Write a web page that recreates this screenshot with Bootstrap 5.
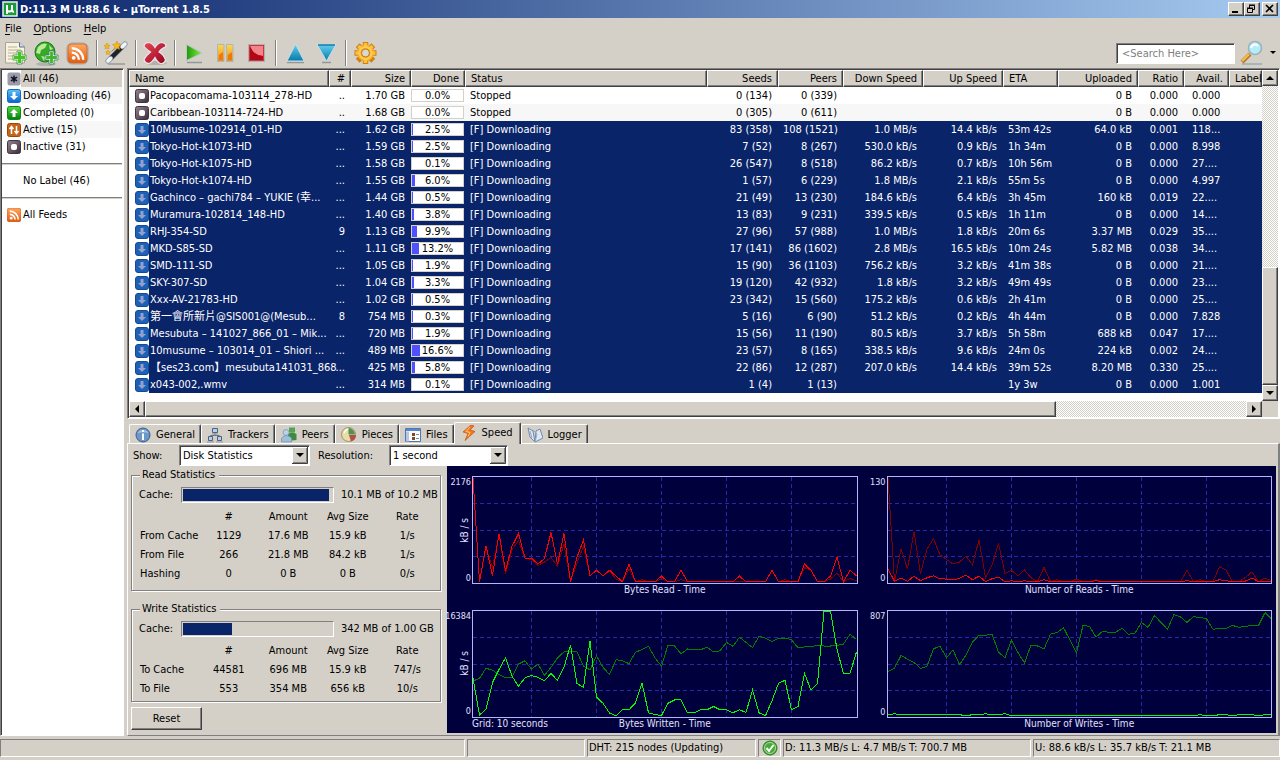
<!DOCTYPE html>
<html lang="en">
<head>
<meta charset="utf-8">
<meta name="viewport" content="width=device-width, initial-scale=1">
<title>µTorrent 1.8.5</title>
<link href="https://cdn.jsdelivr.net/npm/bootstrap@5.3.0/dist/css/bootstrap.min.css" rel="stylesheet">
<style>
:root{--face:#d4d0c8;--shade:#808080;--dark:#404040;--navy:#0a246a;}
body{background:var(--face);color:#000;font-family:"DejaVu Sans Condensed","DejaVu Sans","Noto Sans CJK TC",sans-serif;font-size:11px;line-height:17px;}
a{color:inherit;text-decoration:none}
button{color:#000;font-size:11px}
svg{display:block;flex:none}
.raised{background:var(--face);border:1px solid;border-color:#fff var(--dark) var(--dark) #fff;box-shadow:inset -1px -1px var(--shade);padding:0;border-radius:0}
.sunken{border:1px solid;border-color:var(--shade) #fff #fff var(--shade);box-shadow:inset 1px 1px var(--dark);padding:1px}
.thin-in{border:1px solid;border-color:var(--shade) #fff #fff var(--shade)}
.titlebar{height:18px;background:linear-gradient(to right,#0a246a,#a6caf0);color:#fff;font-weight:700}
.winbtns{padding-right:2px}
.winbtn{width:16px;height:14px}
.winbtn.apart{margin-left:2px}
.menubar{height:20px;padding-left:5px}
.menubar a{margin-right:12px}
.menubar u{text-underline-offset:2px}
.toolbar{height:30px}
.toolbtn{width:31px;height:28px;border:0;background:none;padding:0}
.vline{width:2px;height:26px;margin:0 3px;background:linear-gradient(to right,#808080 50%,#fff 50%)}
.search{width:119px;height:21px;background:#fff;font-size:11px;border-radius:0;padding:0 5px}
.search::placeholder{color:#808080;opacity:1}
.engines{width:14px}
.sidebar{width:124px;background:#fff;margin-right:3px}
.sidebar a{height:17px;padding-left:5px}
.sidebar a span{padding:1px 0 0 2px;height:17px;line-height:16px;white-space:nowrap}
.sidebar .tint{background:#f7f7f7}
.sidebar .current{background:var(--face)}
.sidebar .rule{height:17px;padding:8px 0 7px}
.sidebar .rule div{height:2px;background:linear-gradient(#808080 50%,#d4d0c8 50%)}
.jobs{table-layout:fixed;width:100%;border-collapse:separate;border-spacing:0;white-space:nowrap}
.jobs th{font-weight:400;height:17px;line-height:15px;padding:0 5px}
.jobs th:last-child{padding-right:0}
.jobs td{height:17px;line-height:16px;padding:1px 6px 0 5px}
.jobs th.num,.jobs td.num{text-align:right}
.jobs .name{padding:0 0 0 6px}
.jobs .name span{display:block;height:17px;padding:1px 0 0 1px;flex:1 1 auto;min-width:0}
.jobs .idx{padding:1px 6px 0 0}
.jobs .alt td,.jobs .alt .name span{background:#f7f7f7}
.jobs .picked td,.jobs .picked .name span{background:var(--navy);color:#fff}
.jobs tr td.name{background:#fff}
.jobs td.gauge{padding:0 1px 0 0}
.done{height:13px;border:1px solid var(--face);border-radius:0;background:#fff;color:#000;font-size:11px;position:relative;margin-bottom:1px}
.done .progress-bar{background:#5050ff;transition:none}
.done b{position:absolute;inset:0;font-weight:400;text-align:center;line-height:11px}
.sb{width:16px;height:16px;display:flex;align-items:center;justify-content:center;flex:none}
.corner{background:var(--face)}
.track{background:repeating-conic-gradient(#fff 0 25%,#d4d0c8 0 50%) 0 0/2px 2px}
.tabs{height:24px;padding-left:2px}
.tab{height:19px;border:0;border-top:1px solid #fff;border-left:1px solid #fff;border-right:1px solid var(--dark);box-shadow:inset -1px 0 var(--shade);border-radius:2px 2px 0 0;background:none;padding:2px 5px 0;gap:5px;line-height:16px}
.tab.active{height:22px;padding:0 7px 2px 6px;margin-bottom:-1px;background:var(--face);position:relative}
.sheet{border:1px solid;border-color:#fff var(--shade) var(--shade) #fff;border-right-width:2px;padding:0 2px 2px 3px}
.controls{height:22px}
.controls .lead-show{width:48px;padding-left:2px}
.controls .lead-res{width:79px;padding-left:8px}
.controls select{height:21px;border:1px solid;border-color:#808080 #fff #fff #808080;box-shadow:inset 1px 1px #404040;border-radius:0;font-size:11px;line-height:17px;padding:1px 18px 0 3px;color:#000;background:#fff url("data:image/svg+xml,%3Csvg xmlns='http://www.w3.org/2000/svg' width='16' height='17'%3E%3Cpath fill='%23d4d0c8' d='M0 0h16v17H0z'/%3E%3Cpath fill='none' stroke='%23fff' d='M.5 16V.5H15'/%3E%3Cpath fill='none' stroke='%23404040' d='M0 16.5h15.5V0'/%3E%3Cpath fill='none' stroke='%23808080' d='M1 15.5h13.5V1'/%3E%3Cpath d='M4 6h8l-4 4z'/%3E%3C/svg%3E") no-repeat right 1px top 1px/16px 17px}
.controls .pick-show{width:131px}
.controls .pick-res{width:119px}
.stats{width:316px;padding:2px 6px 3px 0}
.group{border:1px solid var(--shade);box-shadow:1px 1px #fff,inset 1px 1px #fff;padding:4px 3px 7px 7px}
.group + .group{margin-top:11px;padding-bottom:3px}
.group legend{font-size:11px;line-height:14px;float:none;width:auto;margin:0 0 0 1px;padding:0 4px 0 2px;background:var(--face)}
.meter{height:16px;border-radius:0;background:none;padding:1px}
.meter .progress-bar{background:var(--navy);transition:none}
.cachelabel{width:42px}
.cachetext{width:96px;margin-left:7px;white-space:nowrap}
.counts{table-layout:fixed;width:100%;margin-top:3px;text-align:center;white-space:nowrap}
.counts th{font-weight:400}
.counts thead th{height:20px}
.counts tbody tr{height:18px}
.counts tbody th{text-align:left}
.counts .first{width:60px}
.reset{width:71px;height:23px;margin-top:5px}
.charts{background:#00003c;color:#e0e0ff;padding:10px 4px 2px 0;display:grid;grid-template-columns:1fr 1fr;column-gap:4px;row-gap:12px;line-height:12px}
.chart{display:grid;grid-template-columns:25px 1fr;grid-template-rows:108px 12px;font-size:10px}
.axis{display:flex;flex-direction:column;justify-content:space-between;align-items:flex-end;padding-right:1px;font-size:9px}
.axis i{font-style:normal;font-size:10px;writing-mode:vertical-rl;transform:rotate(180deg)}
.plot{border:1px solid #b4b4ff;width:100%;height:108px}
.cap{grid-column:2;text-align:center;position:relative}
.cap em{position:absolute;left:0;font-style:normal}
.statusbar{height:25px;padding:3px 0;gap:2px;border-bottom:1px solid #fff;margin-bottom:3px}
.statusbar>div{height:18px;line-height:16px;padding-left:1px;white-space:nowrap;overflow:hidden}
.cell-a{width:118px}.cell-b{width:169px}.cell-c{width:23px}.cell-d{width:248px}.cell-e{width:247px}
</style>
</head>
<body class="d-flex flex-column min-vh-100">

<svg width="0" height="0" class="position-absolute" aria-hidden="true">
<defs>
<linearGradient id="gBlue" x2="0" y2="1"><stop stop-color="#5cc0ff"/><stop offset="1" stop-color="#0a64c8"/></linearGradient>
<linearGradient id="gGreen" x2="0" y2="1"><stop stop-color="#58dc48"/><stop offset="1" stop-color="#047a0c"/></linearGradient>
<linearGradient id="gPlay" x2="1" y2="0"><stop stop-color="#20980c"/><stop offset="1" stop-color="#80f040"/></linearGradient>
<linearGradient id="gOrange" x2="0" y2="1"><stop stop-color="#ffa860"/><stop offset="1" stop-color="#e05c10"/></linearGradient>
<linearGradient id="gGray" x2="1" y2="1"><stop stop-color="#98848f"/><stop offset="1" stop-color="#382c38"/></linearGradient>
<linearGradient id="gTeal" x2="0" y2="1"><stop stop-color="#60d0f0"/><stop offset="1" stop-color="#0878a8"/></linearGradient>
<linearGradient id="gGold" x2="0" y2="1"><stop stop-color="#ffd850"/><stop offset="1" stop-color="#f08c10"/></linearGradient>
<linearGradient id="gRed" x2="1" y2="1"><stop stop-color="#e84858"/><stop offset="1" stop-color="#98001c"/></linearGradient>
<symbol id="sAll" viewBox="0 0 14 14"><rect x=".5" y=".5" width="13" height="13" rx="2" fill="#9a9cac"/><path d="M7 3.500v7M4 5.200l6 3.600M10 5.200l-6 3.600" stroke="#101020" stroke-width="1.500"/></symbol>
<symbol id="sDown" viewBox="0 0 14 14"><rect x=".5" y=".5" width="13" height="13" rx="2" fill="url(#gBlue)" stroke="#1468c8"/><path d="M5.500 3h3v4H11l-4 4-4-4h2.500z" fill="#fff"/></symbol>
<symbol id="sDownSel" viewBox="0 0 14 14"><rect x=".5" y=".5" width="13" height="13" rx="2.500" fill="#1e60b4" stroke="#124a98"/><path d="M5.500 3h3v4H11l-4 4-4-4h2.500z" fill="#92a0d0"/></symbol>
<symbol id="sUp" viewBox="0 0 14 14"><rect x=".5" y=".5" width="13" height="13" rx="2" fill="url(#gGreen)" stroke="#0a8c14"/><path d="M5.500 11h3V7H11L7 3 3 7h2.500z" fill="#fff"/></symbol>
<symbol id="sAct" viewBox="0 0 14 14"><rect x=".5" y=".5" width="13" height="13" rx="2" fill="#c86418" stroke="#98480c"/><path d="M4.500 11V4M2.500 6l2-2.500 2 2.500M9.500 3v7M7.500 8l2 2.500 2-2.500" stroke="#fff" stroke-width="1.500" fill="none"/></symbol>
<symbol id="sStop" viewBox="0 0 14 14"><rect x=".5" y=".5" width="13" height="13" rx="2" fill="url(#gGray)" stroke="#42343f"/><rect x="4" y="4" width="6" height="6" rx="2" fill="#fff"/></symbol>
<symbol id="sRss" viewBox="0 0 24 24"><rect x="2" y="2" width="20" height="20" rx="4" fill="url(#gOrange)" stroke="#c86830"/><circle cx="8" cy="16.500" r="2" fill="#fff"/><path d="M6 11a7.500 7.500 0 0 1 7.500 7.500M6 6.500a12 12 0 0 1 12 12" stroke="#fff" stroke-width="2.400" fill="none"/></symbol>
</defs>
</svg>

<header>
  <div class="titlebar d-flex align-items-center">
    <svg width="20" height="18" viewBox="0 0 20 18"><rect x="3" y="2" width="14" height="14" fill="#1a9a38" stroke="#e8f4e8" stroke-width="1.500"/><path d="M7 5v9M7 9.500c0 2.500 5 2.500 5 0V5M12 9c0 2 .5 3 2 2.500" stroke="#fff" stroke-width="2" fill="none"/></svg>
    <span class="text-nowrap">D:11.3 M U:88.6 k - µTorrent 1.8.5</span>
    <div class="winbtns ms-auto d-flex">
      <button class="raised winbtn" aria-label="Minimize"><svg width="14" height="12"><path d="M3 8h6v2H3z"/></svg></button>
      <button class="raised winbtn" aria-label="Restore"><svg width="14" height="12"><path d="M4.500 5V2.500h5v4H8M4 2h6M2.500 5.500h5v4h-5zM2 5h6" fill="none" stroke="#000"/></svg></button>
      <button class="raised winbtn apart" aria-label="Close"><svg width="14" height="12"><path d="M3 2l7 7M10 2L3 9" stroke="#000" stroke-width="1.600"/></svg></button>
    </div>
  </div>
  <nav class="menubar d-flex align-items-center">
    <a href="#"><u>F</u>ile</a><a href="#"><u>O</u>ptions</a><a href="#"><u>H</u>elp</a>
  </nav>
  <div class="toolbar d-flex align-items-center">
    <button class="toolbtn" aria-label="Add Torrent"><svg width="31" height="28" viewBox="0 0 31 28"><path d="M5.500 3.500h14l5 4V24h-19z" fill="#f6f2e4" stroke="#a8a490"/><path d="M19.500 3.500v4.500h5" fill="#c8d8e8" stroke="#607088"/><path d="M8 8h9M8 11h13M8 14h8M8 17h6M8 20h5" stroke="#c0b088"/><path d="M17.500 12.500h4v4h4v4h-4v4h-4v-4h-4v-4h4z" fill="#44c420" stroke="#fff"/><path d="M17 12h5v4h4v5h-4v4h-5v-4h-4v-5h4z" fill="none" stroke="#3a8a3a" stroke-width=".8"/></svg></button>
    <button class="toolbtn" aria-label="Add Torrent from URL"><svg width="31" height="28" viewBox="0 0 31 28"><ellipse cx="15" cy="25" rx="10" ry="2" fill="#b0b4a8"/><circle cx="14" cy="13" r="10" fill="#38a828" stroke="#1c7818"/><path d="M7 8c4-4 7-4 9-3l-2 4-4 2-1 4-4-1zM18 6l4 4-3 1zM10 17l5 1-2 4z" fill="#b8ec98"/><path d="M18.500 12.500h4v4h4v4h-4v4h-4v-4h-4v-4h4z" fill="#44b428" stroke="#e8ffe8" stroke-width="1.200"/><path d="M18 12h5v4h4v5h-4v4h-5v-4h-4v-5h4z" fill="none" stroke="#307868" stroke-width=".8"/></svg></button>
    <button class="toolbtn" aria-label="Add RSS Feed"><svg class="mx-auto" width="25" height="25"><rect x="2" y="2" width="21" height="21" rx="5" fill="#e8f0f4" stroke="#98a8b0"/><use href="#sRss" x="1" y="1" width="23" height="23"/></svg></button>
    <div class="vline"></div>
    <button class="toolbtn" aria-label="Create New Torrent"><svg width="31" height="28" viewBox="0 0 31 28"><path d="M7 25h17" stroke="#a8a8a0" stroke-width="2"/><path d="M7 22L24 5" stroke="#98a4ac" stroke-width="5.500" stroke-linecap="round"/><path d="M10 19L21 8" stroke="#202428" stroke-width="4.500"/><path d="M7 22l3-3M21 8l3-3" stroke="#f0f4f8" stroke-width="3.500" stroke-linecap="round"/><path d="M10.500 12.500l8-8" stroke="#788088" stroke-width="1"/><path d="M16 2l1 3 3 .5-2 2 .5 3-2.500-1.500-3 1.500.5-3-2-2 3-.5zM6 4l1 2 2 .5-1.500 1.500.5 2-2-1-2 1 .5-2L3 6.500 5 6zM7 11l.8 1.400 1.700.3-1 1.300.2 1.500-1.700-.7-1.500.7.200-1.500-1-1.300 1.500-.3z" fill="#f8b818" stroke="#c88810" stroke-width=".5"/></svg></button>
    <div class="vline"></div>
    <button class="toolbtn" aria-label="Remove"><svg width="31" height="28" viewBox="0 0 31 28"><ellipse cx="16" cy="24" rx="11" ry="2" fill="#b4b0a8"/><path d="M8 3.500q4 0 7 5 3-5 7-5 4 1 4 4-5 2-7 5.500 5 3 6.500 8-1 4-5 3.500-3-1-5.500-6-3 5-6 6-4 0-5-4 2-4 6.500-7.500Q6 10 4 7.500q0-3 4-4z" fill="url(#gRed)" stroke="#e8e8ec" stroke-width="1.200"/></svg></button>
    <div class="vline"></div>
    <button class="toolbtn" aria-label="Start"><svg width="31" height="28" viewBox="0 0 31 28"><path d="M8 23.500h15" stroke="#90989c" stroke-width="1.500"/><path d="M7.500 5.500L23 14 7.500 21.500z" fill="url(#gPlay)" stroke="#b8c8c8"/></svg></button>
    <button class="toolbtn" aria-label="Pause"><svg width="31" height="28" viewBox="0 0 31 28"><path d="M7.500 5.500h6.500v17H7.500zM16.500 5.500H23v17h-6.500z" fill="url(#gGold)" stroke="#a8b8b8"/><path d="M9 16l4-3v8H9zM18 16l4-3v8h-4z" fill="#f07808"/></svg></button>
    <button class="toolbtn" aria-label="Stop"><svg width="31" height="28" viewBox="0 0 31 28"><rect x="7.500" y="5.500" width="16" height="17" fill="#d83038" stroke="#a8b4b4"/><path d="M9 7h13v10Q12 16 9 7z" fill="#f08488"/><path d="M9 7v14h13v-4Q12 16 9 7z" fill="#b00818"/></svg></button>
    <div class="vline"></div>
    <button class="toolbtn" aria-label="Move Up Queue"><svg width="31" height="28" viewBox="0 0 31 28"><path d="M7 23.500h17" stroke="#90989c" stroke-width="1.500"/><path d="M15.500 5L24 22H7z" fill="url(#gTeal)" stroke="#c8e0e8"/></svg></button>
    <button class="toolbtn" aria-label="Move Down Queue"><svg width="31" height="28" viewBox="0 0 31 28"><path d="M11 23.500h9" stroke="#90989c" stroke-width="1.500"/><path d="M6 5.500h19L15.500 22z" fill="url(#gTeal)" stroke="#c8e0e8"/><path d="M7 6h17" stroke="#1878a8" stroke-width="1.500"/></svg></button>
    <div class="vline"></div>
    <button class="toolbtn" aria-label="Preferences"><svg width="31" height="28" viewBox="0 0 31 28"><g stroke="#d08010" stroke-width="5.500"><path d="M15.500 3v22M4.500 14h22M7.700 6.200l15.600 15.600M23.300 6.200L7.700 21.800"/></g><circle cx="15.500" cy="14" r="8.500" fill="#f4a828"/><g stroke="#fcc040" stroke-width="3.500"><path d="M15.500 4v4M5.500 14h4M8.500 7l3 3M22.500 7l-3 3M15.500 20v4M21.500 14h4"/></g><circle cx="15.500" cy="14" r="6" fill="none" stroke="#ffcc50" stroke-width="2"/><circle cx="15.500" cy="14" r="4" fill="#dcd8cc" stroke="#c07810"/></svg></button>
    <div class="ms-auto d-flex align-items-center">
      <input type="text" class="search sunken" placeholder="&lt;Search Here&gt;" aria-label="Search">
      <button class="toolbtn" aria-label="Run search"><svg width="31" height="28" viewBox="0 0 31 28"><path d="M7 25h20" stroke="#a8b4b8" stroke-width="2"/><path d="M7 23l8-8" stroke="#b07820" stroke-width="4"/><path d="M7 22l7-7" stroke="#f4b848" stroke-width="2.500"/><circle cx="20" cy="9" r="6.500" fill="#b4ecf8" stroke="#98b4c0" stroke-width="1.600"/><path d="M16 9a4 4 0 0 1 7-2" stroke="#fff" stroke-width="2" fill="none"/></svg></button>
      <button class="toolbtn engines" aria-label="Search engines"><svg class="mx-auto" width="8" height="6"><path d="M1 1h6L4 4z"/></svg></button>
    </div>
  </div>
</header>

<main class="d-flex flex-fill">
  <nav class="sidebar sunken flex-shrink-0">
    <a href="#" class="d-flex align-items-center"><svg width="14" height="14"><use href="#sAll"/></svg><span class="flex-fill current">All (46)</span></a>
    <a href="#" class="d-flex align-items-center"><svg width="14" height="14"><use href="#sDown"/></svg><span class="flex-fill tint">Downloading (46)</span></a>
    <a href="#" class="d-flex align-items-center"><svg width="14" height="14"><use href="#sUp"/></svg><span class="flex-fill">Completed (0)</span></a>
    <a href="#" class="d-flex align-items-center"><svg width="14" height="14"><use href="#sAct"/></svg><span class="flex-fill tint">Active (15)</span></a>
    <a href="#" class="d-flex align-items-center"><svg width="14" height="14"><use href="#sStop"/></svg><span class="flex-fill">Inactive (31)</span></a>
    <div class="rule"><div></div></div>
    <a href="#" class="d-flex align-items-center"><svg width="14" height="14"></svg><span>No Label (46)</span></a>
    <div class="rule"><div></div></div>
    <a href="#" class="d-flex align-items-center"><svg width="14" height="14" viewBox="2 2 20 20"><use href="#sRss" width="24" height="24"/></svg><span>All Feeds</span></a>
  </nav>

  <div class="flex-fill d-flex flex-column">
    <section class="sunken flex-fill d-flex flex-column bg-white">
      <div class="d-flex flex-fill">
        <div class="flex-fill pb-2">
          <table class="jobs">
            <colgroup><col style="width:200px"><col style="width:22px"><col style="width:60px"><col style="width:54px"><col><col style="width:71px"><col style="width:65px"><col style="width:80px"><col style="width:80px"><col style="width:55px"><col style="width:80px"><col style="width:46px"><col style="width:45px"><col style="width:33px"></colgroup>
            <thead><tr><th class="raised">Name</th><th class="raised num">#</th><th class="raised num">Size</th><th class="raised num">Done</th><th class="raised">Status</th><th class="raised num">Seeds</th><th class="raised num">Peers</th><th class="raised num">Down Speed</th><th class="raised num">Up Speed</th><th class="raised">ETA</th><th class="raised num">Uploaded</th><th class="raised num">Ratio</th><th class="raised num">Avail.</th><th class="raised">Label</th></tr></thead>
            <tbody id="jobs"></tbody>
          </table>
        </div>
        <div class="d-flex flex-column">
          <button class="raised sb" aria-label="Scroll up"><svg width="8" height="5"><path d="M4 0l4 4H0z"/></svg></button>
          <div class="track flex-fill d-flex flex-column"><div style="flex:61"></div><div class="raised" style="flex:39"></div></div>
          <button class="raised sb" aria-label="Scroll down"><svg width="8" height="5"><path d="M4 4l4-4H0z"/></svg></button>
        </div>
      </div>
      <div class="d-flex">
        <button class="raised sb" aria-label="Scroll left"><svg width="5" height="8"><path d="M0 4l4-4v8z"/></svg></button>
        <div class="track flex-fill d-flex"><div class="raised" style="flex:911"></div><div style="flex:190"></div></div>
        <button class="raised sb" aria-label="Scroll right"><svg width="5" height="8"><path d="M4 4L0 0v8z"/></svg></button>
        <div class="sb corner"></div>
      </div>
    </section>

    <div class="tabs d-flex align-items-end" role="tablist">
      <button class="tab d-flex" role="tab"><svg width="16" height="16"><circle cx="8" cy="8" r="7" fill="#6c98c8" stroke="#3c5c88"/><path d="M2.500 6a6 5 0 0 1 11 0q-5-1.500-11 0z" fill="#a4c4e4"/><path d="M8 3v2M8 6.500V13" stroke="#fff" stroke-width="2"/></svg>General</button>
      <button class="tab d-flex" role="tab"><svg width="16" height="16"><path d="M8 6v3M3.500 10V8.500h9V10" stroke="#687888" fill="none"/><g fill="#b4d0f0" stroke="#50607c"><path d="M5.500 1.500h5v4h-5zM1.500 9.500h4v4h-4zM10.500 9.500h4v4h-4z"/></g><path d="M5 7h6M0 15h7M9 15h7" stroke="#8c94a0"/></svg>Trackers</button>
      <button class="tab d-flex" role="tab"><svg width="16" height="16"><path d="M8 .5h6v5H8z" fill="#58a058"/><path d="M7 14V7q4-3 8.500 0v6z" fill="#3c8c40"/><circle cx="5" cy="5.500" r="3" fill="#b4d4ec" stroke="#7890a8" stroke-width=".7"/><path d="M.5 15v-4q5-5 10 0v4z" fill="#9cc0dc" stroke="#7890a8" stroke-width=".7"/></svg>Peers</button>
      <button class="tab d-flex" role="tab"><svg width="16" height="16"><circle cx="7.500" cy="7.500" r="7" fill="#e8dca8" stroke="#a09060"/><path d="M7.500 7.500V1a7 7 0 0 1 6.500 6.500z" fill="#4c9450"/><path d="M8 8h7q0 5-5 6.500z" fill="#b05048"/><path d="M3 6q1-3 4-4" stroke="#fff" stroke-width="1.500" fill="none"/></svg>Pieces</button>
      <button class="tab d-flex" role="tab"><svg width="16" height="16"><path d="M.5 1.500h15v13H.5z" fill="#f8fafc" stroke="#5078b0"/><path d="M1 3h14" stroke="#5888d0" stroke-width="2"/><path d="M1 4.500h3v10H1z" fill="#b4c8e4"/><path d="M7 6h3v3H7zM7 10h3v3H7z" fill="#804828"/><path d="M11 7.500h3M11 11.500h3" stroke="#888"/></svg>Files</button>
      <button class="tab active d-flex align-items-center" role="tab" aria-selected="true"><svg width="16" height="16"><path d="M10 0L2 7l5 1.500L4 15.500l10-9L9 5l4-4z" fill="#f47820" stroke="#c84c10" stroke-width=".7"/><path d="M9 2L5 6.500l4 1-2 4" stroke="#ffcc70" fill="none"/></svg>Speed</button>
      <button class="tab d-flex" role="tab"><svg width="16" height="16"><path d="M1 1l5 3 2 11-5-5zM9 4l4-2 3 9-8 4z" fill="#dce8f4" stroke="#7488a8"/><path d="M3 4l2 7M6 3l4 4-2 8" stroke="#98a8c4" fill="none"/></svg>Logger</button>
    </div>

    <section class="sheet">
      <div class="controls d-flex align-items-center">
        <label for="show" class="lead-show">Show:</label>
        <select id="show" class="form-select pick-show"><option>Disk Statistics</option></select>
        <label for="res" class="lead-res">Resolution:</label>
        <select id="res" class="form-select pick-res"><option>1 second</option></select>
      </div>
      <div class="d-flex">
        <div class="stats flex-shrink-0">
          <fieldset class="group">
            <legend>Read Statistics</legend>
            <div class="d-flex align-items-center">
              <span class="cachelabel">Cache:</span>
              <div class="progress meter thin-in flex-fill"><div class="progress-bar" style="width:98%"></div></div>
              <span class="cachetext">10.1 MB of 10.2 MB</span>
            </div>
            <table class="counts">
              <thead><tr><th class="first"></th><th>#</th><th>Amount</th><th>Avg Size</th><th>Rate</th></tr></thead>
              <tbody>
                <tr><th>From Cache</th><td>1129</td><td>17.6 MB</td><td>15.9 kB</td><td>1/s</td></tr>
                <tr><th>From File</th><td>266</td><td>21.8 MB</td><td>84.2 kB</td><td>1/s</td></tr>
                <tr><th>Hashing</th><td>0</td><td>0 B</td><td>0 B</td><td>0/s</td></tr>
              </tbody>
            </table>
          </fieldset>
          <fieldset class="group">
            <legend>Write Statistics</legend>
            <div class="d-flex align-items-center">
              <span class="cachelabel">Cache:</span>
              <div class="progress meter thin-in flex-fill"><div class="progress-bar" style="width:33%"></div></div>
              <span class="cachetext">342 MB of 1.00 GB</span>
            </div>
            <table class="counts">
              <thead><tr><th class="first"></th><th>#</th><th>Amount</th><th>Avg Size</th><th>Rate</th></tr></thead>
              <tbody>
                <tr><th>To Cache</th><td>44581</td><td>696 MB</td><td>15.9 kB</td><td>747/s</td></tr>
                <tr><th>To File</th><td>553</td><td>354 MB</td><td>656 kB</td><td>10/s</td></tr>
              </tbody>
            </table>
          </fieldset>
          <button class="raised reset">Reset</button>
        </div>
        <div class="charts flex-fill">
          <div class="chart"><div class="axis"><span>2176</span><i>kB / s</i><span>0</span></div><svg class="plot" id="bytesRead"></svg><div class="cap">Bytes Read - Time</div></div>
          <div class="chart"><div class="axis"><span>130</span><span>0</span></div><svg class="plot" id="reads"></svg><div class="cap">Number of Reads - Time</div></div>
          <div class="chart"><div class="axis"><span>16384</span><i>kB / s</i><span>0</span></div><svg class="plot" id="bytesWritten"></svg><div class="cap"><em>Grid: 10 seconds</em>Bytes Written - Time</div></div>
          <div class="chart"><div class="axis"><span>807</span><span>0</span></div><svg class="plot" id="writes"></svg><div class="cap">Number of Writes - Time</div></div>
        </div>
      </div>
    </section>
  </div>
</main>

<footer class="statusbar d-flex">
  <div class="thin-in flex-fill"></div>
  <div class="thin-in cell-a"></div>
  <div class="thin-in cell-b">DHT: 215 nodes (Updating)</div>
  <div class="thin-in cell-c"><svg class="mx-auto" width="16" height="16"><circle cx="8" cy="8" r="7" fill="#48a838" stroke="#2c7c28"/><circle cx="8" cy="8" r="5.500" fill="none" stroke="#a8e098"/><path d="M4.500 8l2.500 3 4.500-6" stroke="#fff" stroke-width="2" fill="none"/></svg></div>
  <div class="thin-in cell-d">D: 11.3 MB/s L: 4.7 MB/s T: 700.7 MB</div>
  <div class="thin-in cell-e">U: 88.6 kB/s L: 35.7 kB/s T: 21.1 MB</div>
</footer>

<script src="https://cdn.jsdelivr.net/npm/bootstrap@5.3.0/dist/js/bootstrap.bundle.min.js"></script>
<script>
// name | # | size | done | seeds | peers | down | up | eta | uploaded | ratio | availability
const jobs = `Pacopacomama-103114_278-HD|..|1.70 GB|0.0|0 (134)|0 (339)||||0 B|0.000|0.000
Caribbean-103114-724-HD|..|1.68 GB|0.0|0 (305)|0 (611)||||0 B|0.000|0.000
10Musume-102914_01-HD|...|1.62 GB|2.5|83 (358)|108 (1521)|1.0 MB/s|14.4 kB/s|53m 42s|64.0 kB|0.001|118...
Tokyo-Hot-k1073-HD|...|1.59 GB|2.5|7 (52)|8 (267)|530.0 kB/s|0.9 kB/s|1h 34m|0 B|0.000|8.998
Tokyo-Hot-k1075-HD|...|1.58 GB|0.1|26 (547)|8 (518)|86.2 kB/s|0.7 kB/s|10h 56m|0 B|0.000|27....
Tokyo-Hot-k1074-HD|...|1.55 GB|6.0|1 (57)|6 (229)|1.8 MB/s|2.1 kB/s|55m 5s|0 B|0.000|4.997
Gachinco – gachi784 – YUKIE (幸...|...|1.44 GB|0.5|21 (49)|13 (230)|184.6 kB/s|6.4 kB/s|3h 45m|160 kB|0.019|22....
Muramura-102814_148-HD|...|1.40 GB|3.8|13 (83)|9 (231)|339.5 kB/s|0.5 kB/s|1h 11m|0 B|0.000|14....
RHJ-354-SD|9|1.13 GB|9.9|27 (96)|57 (988)|1.0 MB/s|1.8 kB/s|20m 6s|3.37 MB|0.029|35....
MKD-S85-SD|...|1.11 GB|13.2|17 (141)|86 (1602)|2.8 MB/s|16.5 kB/s|10m 24s|5.82 MB|0.038|34....
SMD-111-SD|...|1.05 GB|1.9|15 (90)|36 (1103)|756.2 kB/s|3.2 kB/s|41m 38s|0 B|0.000|21....
SKY-307-SD|...|1.04 GB|3.3|19 (120)|42 (932)|1.8 kB/s|3.2 kB/s|49m 49s|0 B|0.000|23....
Xxx-AV-21783-HD|...|1.02 GB|0.5|23 (342)|15 (560)|175.2 kB/s|0.6 kB/s|2h 41m|0 B|0.000|25....
第一會所新片@SIS001@(Mesub...|8|754 MB|0.3|5 (16)|6 (90)|51.2 kB/s|0.2 kB/s|4h 44m|0 B|0.000|7.828
Mesubuta – 141027_866_01 – Mik...|...|720 MB|1.9|15 (56)|11 (190)|80.5 kB/s|3.7 kB/s|5h 58m|688 kB|0.047|17....
10musume – 103014_01 – Shiori ...|...|489 MB|16.6|23 (57)|8 (165)|338.5 kB/s|9.6 kB/s|24m 0s|224 kB|0.002|24....
【ses23.com】mesubuta141031_868|...|425 MB|5.8|22 (86)|12 (287)|207.0 kB/s|14.4 kB/s|39m 52s|8.20 MB|0.330|25....
x043-002,.wmv|...|314 MB|0.1|1 (4)|1 (13)|||1y 3w|0 B|0.000|1.001`.split('\n').map(l => l.split('|'));

document.getElementById('jobs').innerHTML = jobs.map((j, i) => {
  const on = i > 1, [name, n, size, done, seeds, peers, down, up, eta, sent, ratio, avail] = j;
  return `<tr class="${on ? 'picked' : i ? 'alt' : ''}">
<td class="name"><div class="d-flex align-items-center"><svg width="14" height="14"><use href="#${on ? 'sDownSel' : 'sStop'}"/></svg><span>${name}</span></div></td>
<td class="num idx">${n}</td><td class="num">${size}</td>
<td class="gauge"><div class="progress done"><div class="progress-bar" style="width:${done}%"></div><b>${done}%</b></div></td>
<td>${on ? '[F] Downloading' : 'Stopped'}</td><td class="num">${seeds}</td><td class="num">${peers}</td><td class="num">${down}</td><td class="num">${up}</td>
<td>${eta}</td><td class="num">${sent}</td><td class="num">${ratio}</td><td class="ps-2">${avail}</td><td></td></tr>`;
}).join('');

// sixty samples per series, 0 to 321 over the height of a plot
const flat = (v, n) => Array(n).fill(v);
const series = {
  bytesRead: [['#800000', [319,2,105,45,145,26,100,127,74,70,52,62,76,50,118,2,60,110,20,37,20,34,10,2,40,2,8,2,2,10,2,2,8,...flat(2,13),37,2,8,2,2,45,37,2,2,10,28,2,12,4]],
    ['#ff0000', [319,2,112,20,149,36,110,149,74,74,56,73,152,56,149,2,77,130,20,37,20,37,19,2,56,2,2,2,2,19,2,2,37,...flat(2,8),19,...flat(2,4),37,...flat(2,4),56,37,2,2,19,76,2,37,20]]],
  reads: [['#800000', [319,2,103,40,155,26,102,133,84,70,56,62,80,53,130,14,52,119,27,37,20,38,14,2,46,2,8,2,2,10,2,2,8,...flat(2,13),37,2,8,2,2,47,38,2,2,15,32,2,13,5]],
    ['#ff0000', [41,3,13,3,19,5,14,20,11,10,8,12,22,8,19,2,11,16,2,5,2,5,2,2,8,...flat(2,7),5,...flat(2,13),5,...flat(2,4),8,5,2,2,4,13,2,4,2]]],
  bytesWritten: [['#008000', [108,116,147,141,128,118,120,160,170,144,160,125,150,179,197,197,197,153,142,185,150,128,173,170,161,196,204,214,179,153,218,215,191,206,203,203,212,197,200,226,214,242,226,210,245,239,228,239,239,235,209,212,212,218,215,215,217,221,251,235]],
    ['#00ff00', [117,4,22,103,143,179,123,92,118,125,119,109,131,110,150,218,100,89,231,59,40,10,2,20,20,41,101,11,5,3,40,50,50,11,11,20,20,30,20,20,11,20,12,80,11,2,48,101,110,20,30,131,80,100,321,321,205,131,131,197]]],
  writes: [['#008000', [137,147,186,175,165,146,153,206,215,179,203,158,187,227,248,248,251,196,179,233,195,163,218,215,206,251,256,271,233,194,278,275,242,260,257,257,269,251,254,287,272,308,287,266,311,304,287,305,302,299,266,269,269,278,272,275,278,278,317,298]],
    ['#00ff00', [5,8,...flat(5,10),2,5,5,8,5,5,8,...flat(2,29),5,2,2,5,5,2,5,5,5,2,5,5]]]
};
const dash = d => `<path d="${d}" stroke="#2828a8" stroke-dasharray="4 3" vector-effect="non-scaling-stroke" shape-rendering="crispEdges"/>`;
for (const [id, lines] of Object.entries(series)) {
  const svg = document.getElementById(id);
  svg.setAttribute('viewBox', '0 0 590 324');
  svg.setAttribute('preserveAspectRatio', 'none');
  svg.innerHTML = [81, 162, 243].map(y => dash(`M0 ${y}H590`)).join('') +
    [90, 190, 290, 390, 490].map(x => dash(`M${x} 0V324`)).join('') +
    lines.map(([c, v]) => `<polyline fill="none" stroke="${c}" vector-effect="non-scaling-stroke" shape-rendering="crispEdges" points="${v.map((h, i) => i * 10 + ',' + (322 - h)).join(' ')}"/>`).join('');
}
</script>
</body>
</html>
